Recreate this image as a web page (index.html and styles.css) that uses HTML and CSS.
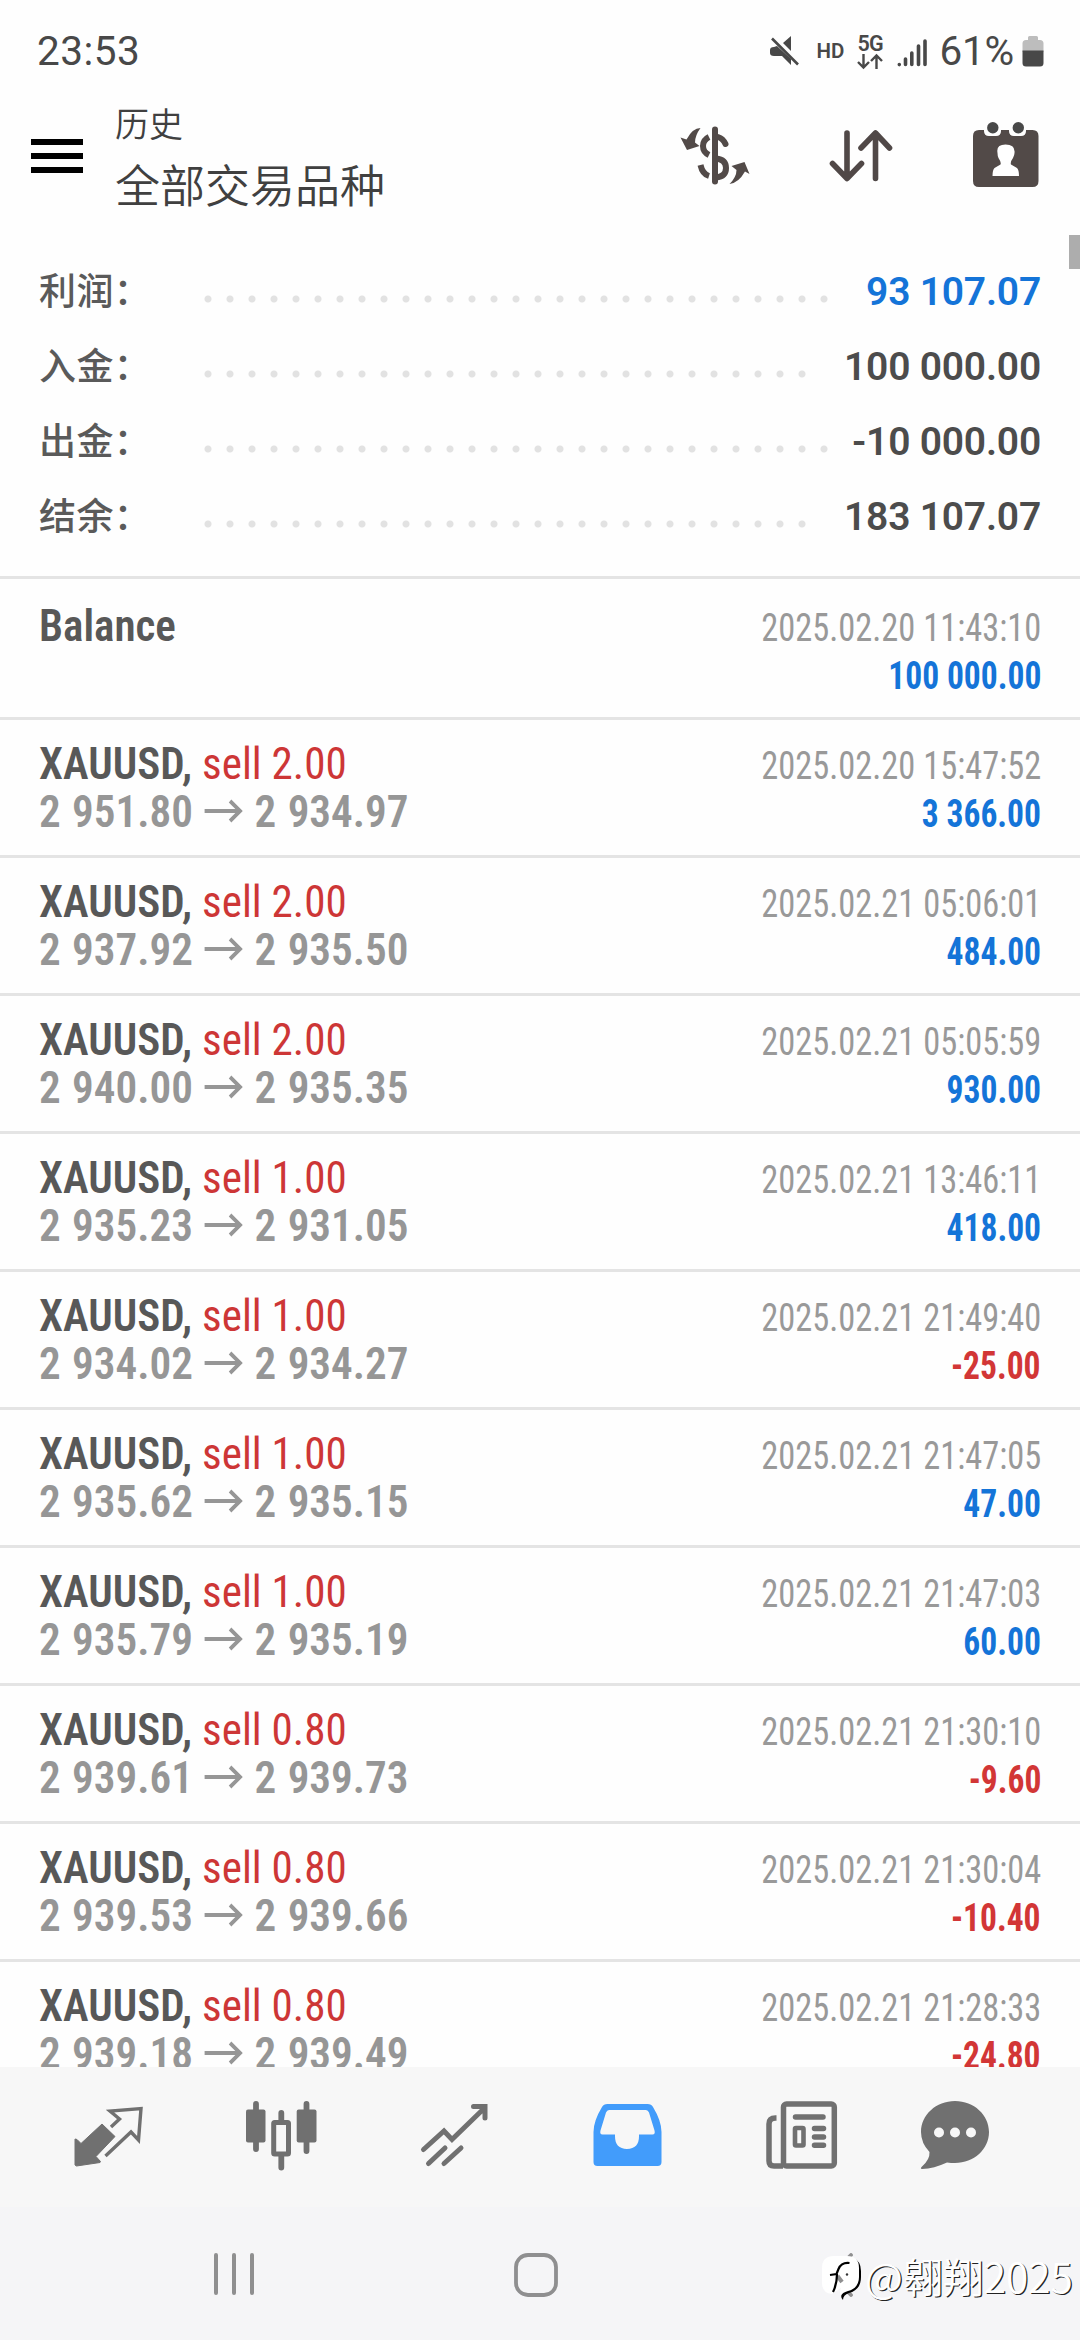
FILE: index.html
```html
<!DOCTYPE html>
<html lang="zh-CN">
<head>
<meta charset="utf-8">
<title>历史</title>
<link rel="stylesheet" href="styles.css">
</head>
<body>
<div class="screen">
  <div class="status">
    <span class="clock">23:53</span>
    <svg class="mute" width="30" height="30" viewBox="766 36 30 30"><path fill="#484848" d="M766 50q0-3 4-3l3-1 14 13v6l-9-9h-8q-4 0-4-3zM779 43l8-7v15z"/><path stroke="#484848" stroke-width="2.6" d="M768 38.500l26 26"/></svg>
    <span class="hd">HD</span>
    <div class="net"><span>5G</span><svg width="26" height="17" viewBox="0 0 26 17" fill="none" stroke="#484848" stroke-width="2.4"><path d="M6.500 1v13M1 9l5.500 5.500L12 9M19.500 16V2M14 8l5.500-5.500L25 8"/></svg></div>
    <svg class="signal" width="30" height="30" viewBox="0 0 30 30" stroke="#484848" stroke-width="3.600" stroke-linecap="round"><path d="M2.300 26.500v.1M8.500 21v5.500M14.800 15v11.500M21.500 8v18.500M28 3v23.500"/></svg>
    <span class="pct">61%</span>
    <svg class="battery" width="22" height="32" viewBox="0 0 22 32"><path fill="#bdbdbd" d="M6 5V2.500Q6 1 7.500 1h7Q16 1 16 2.500V5h2q3.500 0 3.500 3.500V17H.5V8.500Q.5 5 4 5z"/><path fill="#484848" d="M.5 15.500h21V28q0 3.500-3.500 3.500H4Q.5 31.500.5 28z"/></svg>
  </div>

  <header class="header">
    <svg class="menu" width="52" height="34" viewBox="0 0 52 34"><path d="M0 0h52v6H0zM0 14h52v6H0zM0 28h52v6H0z"/></svg>
    <div class="titles"><span class="sup">历史</span><span class="main">全部交易品种</span></div>
    <svg class="act-dollar" width="70" height="60" viewBox="680 126 70 60" fill="none" stroke="#524a48" stroke-width="6"><path d="M715 129.500v52" stroke-linecap="round"/><path d="M709 137q-6 3-6 9t6 9M700.500 165q2 9 8.500 11"/><path stroke-linecap="round" d="M718 137q5 1.500 7.500 7"/><path d="M716 158.500q10 1 10 9.500t-10 9.500"/><path fill="#524a48" stroke="none" d="M700.500 128q-8 0-14 11.500l-6-2 6.500 12.500 12.500-4-4.500-3.500q0-7 5.500-14.500zM729.500 184q9-1 15.500-12.500l4.500 2.500-5-12-13 4 5 4q0 7-7 14z"/></svg>
    <svg class="act-sort" width="64" height="54" viewBox="829 129 64 54" fill="none" stroke="#504847" stroke-width="5.600" stroke-linecap="round" stroke-linejoin="round"><path d="M847 133v45M832.500 163.500l14.500 15 14.500-15M875.500 178.500V134M861 148l14.500-15 14 15"/></svg>
    <svg class="act-cal" width="66" height="66" viewBox="973 122 66 66"><path fill="#524a48" d="M979 130h5v1q0 5 5 5h7q5 0 5-5v-1h8v1q0 5 5 5h7q5 0 5-5v-1h6.500q6 0 6 6v45q0 6-6 6H979q-6 0-6-6v-45q0-6 6-6z"/><circle cx="992.800" cy="127.700" r="5.700" fill="#484848"/><circle cx="1018.300" cy="127.700" r="5.700" fill="#484848"/><path fill="#fff" d="M997.500 153q-1.500-8.500 8-8.500 10 0 9 8.500 0 2-1.500 5-3 4-2 6.500l6 3.500q2 2 2 8h-26.500q0-6 2-8l6-3.500q1-2-2-6.500-1-2-1-5z"/></svg>
  </header>

  <section class="summary">
    <div class="sum"><span class="label">利润：</span><i class="dots"></i><b class="blue">93 107.07</b></div>
    <div class="sum"><span class="label">入金：</span><i class="dots short"></i><b>100 000.00</b></div>
    <div class="sum"><span class="label">出金：</span><i class="dots"></i><b>-10 000.00</b></div>
    <div class="sum"><span class="label">结余：</span><i class="dots short"></i><b>183 107.07</b></div>
  </section>

  <main class="deals">
    <div class="deal balance"><div class="left"><div class="sym">Balance</div></div><div class="right"><time>2025.02.20 11:43:10</time><b class="blue">100 000.00</b></div></div>
    <div class="deal"><div class="left"><div class="sym">XAUUSD, <span>sell 2.00</span></div><div class="price">2 951.80<svg class="arrow"><use href="#to"/></svg>2 934.97</div></div><div class="right"><time>2025.02.20 15:47:52</time><b class="blue">3 366.00</b></div></div>
    <div class="deal"><div class="left"><div class="sym">XAUUSD, <span>sell 2.00</span></div><div class="price">2 937.92<svg class="arrow"><use href="#to"/></svg>2 935.50</div></div><div class="right"><time>2025.02.21 05:06:01</time><b class="blue">484.00</b></div></div>
    <div class="deal"><div class="left"><div class="sym">XAUUSD, <span>sell 2.00</span></div><div class="price">2 940.00<svg class="arrow"><use href="#to"/></svg>2 935.35</div></div><div class="right"><time>2025.02.21 05:05:59</time><b class="blue">930.00</b></div></div>
    <div class="deal"><div class="left"><div class="sym">XAUUSD, <span>sell 1.00</span></div><div class="price">2 935.23<svg class="arrow"><use href="#to"/></svg>2 931.05</div></div><div class="right"><time>2025.02.21 13:46:11</time><b class="blue">418.00</b></div></div>
    <div class="deal"><div class="left"><div class="sym">XAUUSD, <span>sell 1.00</span></div><div class="price">2 934.02<svg class="arrow"><use href="#to"/></svg>2 934.27</div></div><div class="right"><time>2025.02.21 21:49:40</time><b class="red">-25.00</b></div></div>
    <div class="deal"><div class="left"><div class="sym">XAUUSD, <span>sell 1.00</span></div><div class="price">2 935.62<svg class="arrow"><use href="#to"/></svg>2 935.15</div></div><div class="right"><time>2025.02.21 21:47:05</time><b class="blue">47.00</b></div></div>
    <div class="deal"><div class="left"><div class="sym">XAUUSD, <span>sell 1.00</span></div><div class="price">2 935.79<svg class="arrow"><use href="#to"/></svg>2 935.19</div></div><div class="right"><time>2025.02.21 21:47:03</time><b class="blue">60.00</b></div></div>
    <div class="deal"><div class="left"><div class="sym">XAUUSD, <span>sell 0.80</span></div><div class="price">2 939.61<svg class="arrow"><use href="#to"/></svg>2 939.73</div></div><div class="right"><time>2025.02.21 21:30:10</time><b class="red">-9.60</b></div></div>
    <div class="deal"><div class="left"><div class="sym">XAUUSD, <span>sell 0.80</span></div><div class="price">2 939.53<svg class="arrow"><use href="#to"/></svg>2 939.66</div></div><div class="right"><time>2025.02.21 21:30:04</time><b class="red">-10.40</b></div></div>
    <div class="deal"><div class="left"><div class="sym">XAUUSD, <span>sell 0.80</span></div><div class="price">2 939.18<svg class="arrow"><use href="#to"/></svg>2 939.49</div></div><div class="right"><time>2025.02.21 21:28:33</time><b class="red">-24.80</b></div></div>
  </main>

  <nav class="tabs">
    <svg viewBox="22 2067 173 140"><path fill="#707070" stroke="#707070" stroke-width="1" stroke-linejoin="round" d="M102 2124l13 12.500-19 20 4.500 5-.5 1-23.500 3.500-1.500-1v-26l2 .5 4 4z"/><path fill="none" stroke="#707070" stroke-width="3.400" d="M111 2127l8.500-8-9.500-8 31-2.500-2.500 31.500-7.500-8-25.500 24"/></svg>
    <svg viewBox="195 2067 173 140" fill="#707070"><g stroke="#707070" stroke-width="5.800" stroke-linecap="round"><path d="M256 2104v45M306.500 2104v47M281.300 2113v9M281.300 2155v12.500"/></g><rect x="246" y="2109.500" width="19.500" height="33" rx="2"/><rect x="296.700" y="2109.500" width="19.800" height="33" rx="2"/><rect x="273.700" y="2122.500" width="14.800" height="31.500" rx="1" fill="none" stroke="#707070" stroke-width="5"/></svg>
    <svg viewBox="368 2067 173 140" fill="none" stroke="#707070" stroke-width="5" stroke-linejoin="miter" stroke-linecap="round"><path d="M423.500 2149.500l20.500-18.500 8 8.500 33-32M473.500 2106.500h11.500v11.500M428.500 2163.500l16.500-15.500M444 2163.500l17-15.500"/></svg>
    <svg viewBox="541 2067 173 140"><path fill="#429cfb" fill-rule="evenodd" d="M607.500 2104h40q4 0 5.500 3 8.500 14 8.500 25v30q0 4-4 4h-60q-4 0-4-4v-30q0-11 8.500-25 1.500-3 5.500-3zM609 2110q-2 0-3 2.500l-5.500 18q-1 4 2 4h12.500v2q0 12 12 12.500 12-.5 12-12.500v-2h13.500q3 0 2-4l-5.500-18q-1-2.500-3-2.500z"/></svg>
    <svg viewBox="713 2067 173 140" fill="none" stroke="#707070" stroke-width="5.500"><rect x="782.500" y="2104" width="50.800" height="62" rx="3"/><path d="M775.500 2118h-1q-6.500 0-6.500 6v37q0 5 5 5h9"/><path stroke-linecap="round" d="M794.500 2117h27.500M813.500 2128.500h9M813.500 2137h9M813.500 2145.300h9"/><rect x="794" y="2128" width="8.500" height="17.500" rx="1" stroke-width="4.600"/></svg>
    <svg viewBox="887 2067 173 140"><path fill="#707070" d="M955 2101c19 0 34 14 34 31s-15 31-34 31q-4 0-8-.5-13 6-25 6.500c-1.500 0-1.500-1 0-2.500q8-7 7.500-14.500-8.500-9-8.500-20c0-17 15-31 34-31z"/><g fill="#f7f7f7"><circle cx="939" cy="2132.500" r="5"/><circle cx="955" cy="2132.500" r="5"/><circle cx="971" cy="2132.500" r="5"/></g></svg>
  </nav>

  <div class="sysnav">
    <svg class="recents" width="40" height="42" viewBox="0 0 40 42" stroke="#8f8f90" stroke-width="4" stroke-linecap="round"><path d="M2 2v38M20 2v38M38 2v38"/></svg>
    <svg class="home" width="44" height="44" viewBox="0 0 44 44"><rect x="2" y="2" width="40" height="40" rx="12" fill="none" stroke="#8f8f90" stroke-width="3.800"/></svg>
    <svg class="back" width="26" height="44" viewBox="0 0 26 44"><path d="M23 2L3 22l20 20" fill="none" stroke="#8f8f90" stroke-width="3.800" stroke-linecap="round"/></svg>
  </div>

  <div class="thumb"></div>
  <div class="watermark">
    <svg width="40" height="48" viewBox="820 2259 40 48"><path fill="#000" d="M852 2263q8 3 8 13v6q0 13-12 16-6 2-6 7-3-3-1.500-9z"/><path fill="#fff" d="M833 2261h13q12 0 12 12v9q0 11-11 14-6 1.500-7 5-2-4 0-8l-9 6q-10-1-10-11v-15q0-12 12-12z"/><path fill="none" stroke="#8f8f90" stroke-width="4" d="M836.500 2281l4.500 6"/><path fill="none" stroke="#000" stroke-width="2.200" d="M848.500 2268q-8-1-11 6l-2 5-6.500 1M836 2279q0 10-4 18"/><circle cx="846" cy="2279.500" r="1.200" fill="#333"/></svg>
    <span>@翱翔2025</span>
  </div>
</div>
<svg class="defs" width="0" height="0"><symbol id="to" viewBox="0 0 42 24"><path fill="none" stroke="#969696" stroke-width="3.800" d="M1 12h38M27.500 2l10.500 10-10.500 10"/></symbol></svg>
</body>
</html>
```
FILE: styles.css
```css
* { box-sizing: border-box; }
body { margin: 0; background: #fefefe; font-family: Roboto, "Noto Sans CJK SC", sans-serif; color: #4c4c4c; }
svg { display: block; flex: none; }
.defs { position: absolute; }
.screen { position: relative; width: 1080px; height: 2340px; overflow: hidden; display: flex; flex-direction: column; }

.status { height: 102px; padding: 0 36px 0 37px; display: flex; align-items: center; color: #484848; }
.clock { font-size: 40.500px; flex: 1; letter-spacing: .5px; }
.hd { font-size: 20.500px; font-weight: 600; margin-left: 16px; width: 41px; }
.net { width: 26px; display: flex; flex-direction: column; margin-right: 14px; margin-top: 2px; }
.net span { font-size: 21.500px; font-weight: 600; line-height: 18px; height: 18px; letter-spacing: -.8px; }
.signal { margin-top: 4px; margin-right: 12px; }
.pct { font-size: 40.500px; letter-spacing: -.2px; margin-right: 8px; }

.header { height: 134px; padding: 0 41px 0 31px; display: flex; align-items: flex-start; }
.menu { margin: 37px 32px 0 0; }
.titles { flex: 1; display: flex; flex-direction: column; font-weight: 350; color: #404040; }
.sup { font-size: 34px; line-height: 44px; margin-top: 1px; }
.main { font-size: 45px; line-height: 60px; margin-top: 11px; }
.act-dollar { margin: 24px 79px 0 0; }
.act-sort { margin: 27px 80px 0 0; }
.act-cal { margin-top: 20px; }

.summary { height: 343px; padding: 19px 39px 0; border-bottom: 3px solid #e4e4e4; }
.sum { height: 75px; display: flex; align-items: center; }
.label { width: 158px; font-size: 37px; font-weight: 500; line-height: 75px; letter-spacing: .4px; color: #5a5a5a; }
.dots { width: 638px; height: 8px; margin-top: 13px; background: radial-gradient(circle, #e2e2e2 3px, transparent 4px) 0 0 / 22px 8px; }
.dots.short { width: 616px; }
.sum b { flex: 1; text-align: right; font-size: 39px; font-weight: 600; line-height: 75px; letter-spacing: -.2px; }
b.blue, .right .blue { color: #1474d8; }
.right .red { color: #d23636; }

.deals { height: 1488px; flex: none; overflow: hidden; font-stretch: 75%; }
.deal { height: 138px; padding: 20px 39px 0; border-bottom: 3px solid #e4e4e4; display: flex; justify-content: space-between; }
.balance { height: 141px; padding-top: 23px; }
.sym, .price { font-size: 45px; font-weight: 600; line-height: 48px; white-space: pre; display: flex; transform-origin: 0 0; }
.sym { color: #585858; transform: scaleX(.957); }
.sym span { color: #cd3636; font-weight: 400; }
.price { color: #969696; align-items: center; word-spacing: 1.500px; transform: scaleX(.96); }
.arrow { width: 43px; height: 24px; margin: -2px 10px 0 11px; }
.right { margin-top: 2px; display: flex; flex-direction: column; align-items: flex-end; font-size: 38px; line-height: 48px; }
.right time { color: #999; transform: scaleX(.905); transform-origin: 100% 0; }
.right b { font-weight: 700; transform: scaleX(.883); transform-origin: 100% 0; }

.tabs { height: 140px; padding-left: 22px; background: #f7f7f7; display: flex; flex: none; }
.tabs svg { width: 173px; height: 140px; }
.sysnav { flex: 1; background: #f5f5f7; padding: 46px 0 0 214px; display: flex; align-items: flex-start; }
.home { margin-left: 260px; }
.back { margin-left: 270px; }

.thumb { position: absolute; right: 0; top: 235px; width: 11px; height: 34px; background: #adadad; }
.watermark { position: absolute; left: 821px; top: 2254px; display: flex; align-items: center; gap: 4px; }
.watermark span { font-family: "Noto Sans CJK SC", sans-serif; font-size: 40.500px; font-weight: 350; line-height: 50px; margin-top: -5px; color: #fff; text-shadow: 1.200px 1.200px 0 #222; white-space: nowrap; }
```
